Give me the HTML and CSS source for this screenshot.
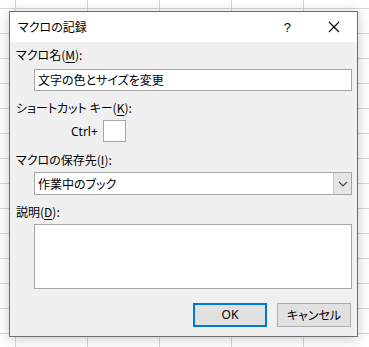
FILE: index.html
```html
<!DOCTYPE html>
<html lang="ja">
<head>
<meta charset="utf-8">
<link rel="stylesheet" href="styles.css">
</head>
<body>
<div class="dialog">
  <div class="titlebar">
    <span class="title">マクロの記録</span>
    <span class="help">?</span>
    <svg class="close" width="12" height="12" viewBox="0 0 12 12"><path d="M1 1 L11 11 M11 1 L1 11" stroke="#000" stroke-width="1.1" fill="none"/></svg>
  </div>
  <div class="content">
    <div class="label">マクロ名(<u>M</u>):</div>
    <div class="field name">文字の色とサイズを変更</div>
    <div class="label l2">ショートカット キー(<u>K</u>):</div>
    <div class="shortcut">
      <span class="ctrl">Ctrl+</span>
      <span class="keybox"></span>
    </div>
    <div class="label l3">マクロの保存先(<u>I</u>):</div>
    <div class="field select">
      <span class="seltext">作業中のブック</span>
      <span class="dropbtn"><svg width="10" height="6" viewBox="0 0 10 6"><path d="M1 1 L5 5 L9 1" stroke="#444" stroke-width="1.1" fill="none"/></svg></span>
    </div>
    <div class="label l4">説明(<u>D</u>):</div>
    <div class="field desc"></div>
    <div class="buttons">
      <span class="btn ok">OK</span>
      <span class="btn">キャンセル</span>
    </div>
  </div>
</div>
</body>
</html>
```
FILE: styles.css
```css
html, body {
  margin: 0;
  padding: 0;
  width: 369px;
  height: 347px;
  overflow: hidden;
}
body {
  background-color: #fff;
  background-image:
    linear-gradient(to right, #d6d6d6 1px, transparent 1px),
    linear-gradient(to bottom, #d6d6d6 1px, transparent 1px);
  background-size: 72px 25px;
  background-position: 15px 8px;
  font-family: "Noto Sans CJK JP", "Noto Sans", sans-serif;
  font-size: 12px;
  font-feature-settings: "palt";
  color: #000;
  padding-top: 11px;
  padding-left: 9px;
  box-sizing: border-box;
}
.dialog {
  width: 349px;
  height: 326px;
  box-sizing: border-box;
  border: 1px solid #6e6e6e;
  background: #f0f0f0;
  box-shadow: 0 2px 12px rgba(0,0,0,0.22);
  display: flex;
  flex-direction: column;
}
.titlebar {
  height: 30px;
  background: #fff;
  display: flex;
  align-items: center;
  padding-left: 8px;
}
.title {
  flex: 1;
  line-height: 16px;
}
.help {
  font-family: "Liberation Sans", sans-serif;
  font-size: 13px;
  margin-right: 37px;
}
.close {
  margin-right: 17px;
}
.content {
  padding: 5px 5px 0 6px;
  display: flex;
  flex-direction: column;
}
.label {
  line-height: 16px;
  height: 16px;
}
.label u {
  text-underline-offset: 2px;
}
.field {
  margin-left: 18px;
  width: 318px;
  box-sizing: border-box;
  border: 1px solid #a6a6a6;
  background: #fff;
}
.name {
  margin-top: 6px;
  height: 22px;
  line-height: 20px;
  padding-left: 3px;
}
.l2 { margin-top: 9px; }
.shortcut {
  margin-top: 4px;
  display: flex;
  align-items: center;
  padding-left: 55px;
  height: 22px;
}
.ctrl {
  font-family: "Noto Sans", sans-serif;
  font-size: 12px;
  margin-right: 5px;
}
.keybox {
  width: 23px;
  height: 22px;
  box-sizing: border-box;
  border: 1px solid #a6a6a6;
  background: #fff;
}
.l3 { margin-top: 10px; }
.select {
  margin-top: 4px;
  height: 23px;
  display: flex;
  align-items: stretch;
}
.seltext {
  flex: 1;
  line-height: 21px;
  padding-left: 3px;
}
.dropbtn {
  width: 17px;
  background: #e5e5e5;
  border-left: 1px solid #c8c8c8;
  display: flex;
  align-items: center;
  justify-content: center;
}
.l4 { margin-top: 9px; }
.desc {
  margin-top: 4px;
  height: 65px;
}
.buttons {
  margin-top: 14px;
  display: flex;
  justify-content: flex-end;
  gap: 10px;
  padding-right: 1px;
}
.btn {
  width: 74px;
  height: 24px;
  box-sizing: border-box;
  border: 1px solid #adadad;
  background: #e1e1e1;
  display: flex;
  align-items: center;
  justify-content: center;
  line-height: 16px;
}
.ok {
  border: 2px solid #0078d7;
  font-family: "Noto Sans", sans-serif;
}
```
